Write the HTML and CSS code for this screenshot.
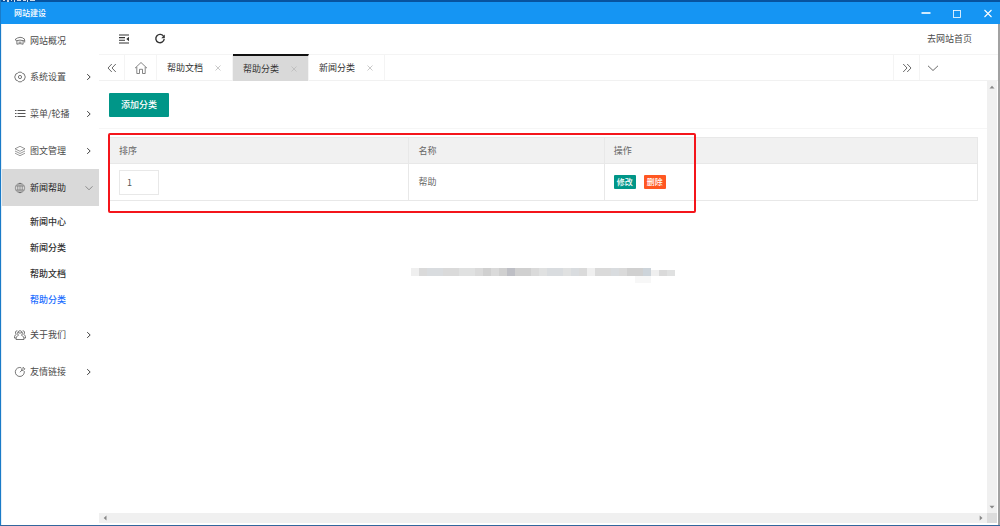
FILE: index.html
```html
<!DOCTYPE html>
<html lang="zh-CN">
<head>
<meta charset="utf-8">
<title>网站建设</title>
<link rel="stylesheet" href="styles.css">
</head>
<body>
<div class="window">
  <div class="desktop-strip">
    <svg class="strip-marks" viewBox="0 0 34 2" aria-hidden="true"><path d="M2 0h2v1h-2zM6 0h2v2h-2zM10 0h1v1h-1zM13 0h1v2h-1zM16 0h4v1h-4zM22 0h3v1h-3zM26 0h1v2h-1zM29 0h5v1h-5z" fill="#cfdcea"/></svg>
  </div>
  <header class="titlebar">
    <span class="title">网站建设</span>
    <div class="win-controls">
      <button class="win-btn" aria-label="最小化"><svg viewBox="0 0 10 10"><path d="M.5 5h9" stroke-width="1.6"/></svg></button>
      <button class="win-btn" aria-label="最大化"><svg viewBox="0 0 10 10"><rect x="1.5" y="2.5" width="7" height="7" stroke-width=".8"/></svg></button>
      <button class="win-btn" aria-label="关闭"><svg viewBox="0 0 10 10"><path d="M1.5 2l7 7m0-7l-7 7" stroke-width="1.1"/></svg></button>
    </div>
  </header>
  <div class="body">
    <nav class="sidebar">
      <a class="item first" href="#"><svg class="ico" viewBox="0 0 12 12"><path d="M1 4.600Q3.500 2.500 6 2.300t5 2.300L9.300 5.700Q6 4.500 2.700 5.700zM2.900 5.800v3.400Q6 8 9.100 9.200V5.800M4.500 7.200h3M10.700 5v2.500"/></svg><span>网站概况</span></a>
      <a class="item" href="#"><svg class="ico" viewBox="0 0 12 12"><path d="M4.600 1.200h2.800L8.500 2.400l1.600.5L11.300 6l-1.200 3.100-1.600.5-1.100 1.200H4.600L3.500 9.600l-1.600-.5L.7 6l1.200-3.100 1.600-.5z"/><circle cx="6" cy="6" r="1.600"/></svg><span>系统设置</span><svg class="arrow" viewBox="0 0 8 8"><path d="M2.200 1.200L5.200 4l-3 2.800"/></svg></a>
      <a class="item" href="#"><svg class="ico" viewBox="0 0 12 12"><path d="M1 2.500h1.500M3.500 2.500h8M1 5.500h1.500M3.500 5.500h8M1 8.500h1.500M3.500 8.500h8" stroke-width="1"/></svg><span>菜单/轮播</span><svg class="arrow" viewBox="0 0 8 8"><path d="M2.200 1.200L5.200 4l-3 2.800"/></svg></a>
      <a class="item" href="#"><svg class="ico" viewBox="0 0 12 12"><path d="M6 1.300l5 2.500-5 2.500-5-2.500zM1 6l5 2.500L11 6M1 8.200l5 2.500 5-2.500" stroke-width=".6"/></svg><span>图文管理</span><svg class="arrow" viewBox="0 0 8 8"><path d="M2.200 1.200L5.200 4l-3 2.800"/></svg></a>
      <a class="item open" href="#"><svg class="ico" viewBox="0 0 12 12"><g stroke-width=".5"><circle cx="6" cy="6" r="4.700"/><ellipse cx="6" cy="6" rx="2.300" ry="4.700"/><path d="M6 1.300v9.400M1.800 4h8.400M1.800 8h8.400"/></g></svg><span>新闻帮助</span><svg class="arrow" viewBox="0 0 8 8"><path d="M.5 2.300L4 5.800l3.500-3.500"/></svg></a>
      <div class="submenu">
        <a href="#">新闻中心</a>
        <a href="#">新闻分类</a>
        <a href="#">帮助文档</a>
        <a class="current" href="#">帮助分类</a>
      </div>
      <a class="item" href="#"><svg class="ico" viewBox="0 0 12 12"><path d="M4.500 6.300a2.500 2.500 0 1 1 3 0c1.700.6 2.400 1.800 2.500 4.200H2c.1-2.400.8-3.600 2.500-4.200zM3.300 1.700C1.500 1.500.8 4 2.200 5.500 1 6 .5 7 .4 9H2M8.700 1.700c1.800-.2 2.500 2.300 1.100 3.800 1.200.5 1.700 1.500 1.800 3.500H10M4 3.600q2 1 4 0"/></svg><span>关于我们</span><svg class="arrow" viewBox="0 0 8 8"><path d="M2.200 1.200L5.200 4l-3 2.800"/></svg></a>
      <a class="item" href="#"><svg class="ico" viewBox="0 0 12 12"><path d="M7.200 1.700A4.500 4.500 0 1 0 10.200 5M6 6.200l2.200-2.400"/><path d="M7.800 2.800L9.300 1.300l.4 1.100 1.200.4-1.600 1.600-1.500-.2z"/></svg><span>友情链接</span><svg class="arrow" viewBox="0 0 8 8"><path d="M2.200 1.200L5.200 4l-3 2.800"/></svg></a>
    </nav>
    <div class="main">
      <div class="toolbar">
        <button class="tool" aria-label="收起菜单"><svg viewBox="0 0 12 12"><path d="M1 2h10M1 4.600h6M1 7.200h6M1 10h10" stroke-width="1.100"/><path d="M11 3.700v4.600L8.300 6z" fill="#333" stroke="none"/></svg></button>
        <button class="tool" aria-label="刷新"><svg viewBox="0 0 12 12"><path d="M9.700 3.500A4.200 4.200 0 1 0 10.200 6" stroke-width="1.400"/><path d="M10.800 1.500v3.700H7.300z" fill="#333" stroke="none"/></svg></button>
        <a class="home-link" href="#">去网站首页</a>
      </div>
      <div class="tabs">
        <button class="tab-nav" aria-label="向左"><svg viewBox="0 0 12 12"><path d="M5.800 2L2 6l3.800 4M9.800 2L6 6l3.800 4"/></svg></button>
        <button class="tab-nav home" aria-label="主页"><svg class="house" viewBox="0 0 14 14"><path d="M1 7.200L7 1.500l6 5.700M2.800 6v6.500h2.700V8.300h3v4.200h2.700V6"/></svg></button>
        <div class="tab"><a href="#">帮助文档</a><button class="close" aria-label="关闭帮助文档"><svg viewBox="0 0 8 8"><path d="M1.500 1.500l5 5m0-5l-5 5"/></svg></button></div>
        <div class="tab active"><a href="#">帮助分类</a><button class="close" aria-label="关闭帮助分类"><svg viewBox="0 0 8 8"><path d="M1.500 1.500l5 5m0-5l-5 5"/></svg></button></div>
        <div class="tab"><a href="#">新闻分类</a><button class="close" aria-label="关闭新闻分类"><svg viewBox="0 0 8 8"><path d="M1.500 1.500l5 5m0-5l-5 5"/></svg></button></div>
        <div class="tabs-end">
          <button class="tab-nav" aria-label="向右"><svg viewBox="0 0 12 12"><path d="M2.200 2L6 6l-3.800 4M6.200 2L10 6l-3.800 4"/></svg></button>
          <button class="tab-nav" aria-label="更多"><svg viewBox="0 0 12 12"><path d="M1 3.800l5 4.700 5-4.700"/></svg></button>
        </div>
      </div>
      <div class="viewport">
        <main class="page">
          <div class="actions"><button class="add">添加分类</button></div>
          <div class="list">
            <table class="table">
              <thead><tr><th class="col-sort">排序</th><th class="col-name">名称</th><th>操作</th></tr></thead>
              <tbody><tr>
                <td><input class="sort" type="text" value="1" aria-label="排序"></td>
                <td>帮助</td>
                <td><div class="row-actions"><button class="mini edit">修改</button><button class="mini delete">删除</button></div></td>
              </tr></tbody>
            </table>
            <div class="highlight"></div>
          </div>
          <div class="mosaic" aria-hidden="true">
            <i class="m0"></i><i class="m2"></i><i class="m3"></i><i class="m3"></i><i class="m2"></i><i class="m2"></i><i class="m1"></i><i class="m1"></i><i class="m2"></i><i class="m4"></i><i class="m2"></i><i class="m4"></i><i class="m5"></i><i class="m4"></i><i class="m4"></i><i class="m2"></i><i class="m1"></i><i class="m3"></i><i class="m3"></i><i class="m1"></i><i class="m3"></i><i class="m2"></i><i class="m0"></i><i class="m2"></i><i class="m2"></i><i class="m3"></i><i class="m2"></i><i class="m4"></i><i class="m4 drip"></i><i class="m6 drip"></i><i class="m0 low"></i><i class="m2 low"></i><i class="m1 low"></i>
          </div>
        </main>
        <div class="vscroll"><svg viewBox="0 0 8 8"><path d="M1.500 5.500L4 2.700l2.500 2.800z"/></svg><svg viewBox="0 0 8 8"><path d="M1.500 2.700L4 5.500l2.500-2.800z"/></svg></div>
        <div class="hscroll"><svg viewBox="0 0 8 8"><path d="M5.500 1.500L2.700 4l2.800 2.500z"/></svg><svg viewBox="0 0 8 8"><path d="M2.700 1.500L5.500 4 2.700 6.500z"/></svg></div>
        <div class="corner"></div>
      </div>
    </div>
  </div>
</div>
</body>
</html>
```
FILE: styles.css
```css
* { box-sizing: border-box; }
body {
  margin: 0;
  background: #fff;
  color: #4a4a4a;
  font: 9px/12px "Noto Sans CJK SC", "Liberation Sans", sans-serif;
}
a { color: inherit; text-decoration: none; }
button {
  margin: 0;
  padding: 0;
  border: 0;
  background: none;
  color: inherit;
  font: inherit;
}
svg { display: block; fill: none; stroke: #444; stroke-width: 0.8; }

.window {
  display: flex;
  flex-direction: column;
  min-height: 100vh;
  border-left: 1px solid #1a7bc8;
  border-bottom: 1px solid #34679d;
}
.desktop-strip { height: 2px; background: #07539f; }
.strip-marks { width: 34px; height: 2px; stroke: none; }
.titlebar {
  display: flex;
  align-items: center;
  justify-content: space-between;
  height: 22px;
  padding: 0 7px 0 13px;
  background: #1595f3;
  color: #fff;
}
.title { font-size: 8px; font-weight: 500; }
.win-controls { display: flex; gap: 21px; }
.win-btn svg { width: 10px; height: 10px; stroke: #fff; stroke-width: 1; }

.body { display: flex; flex: 1; border-right: 2px solid #a2a2a2; }
.sidebar { width: 98px; flex: none; border-left: 1px solid #e4eef6; }
.item {
  display: flex;
  align-items: center;
  height: 37px;
  padding: 0 6px 0 12px;
}
.item.first { height: 34px; }
.ico { width: 12px; height: 12px; margin-right: 4px; stroke: #555; }
.arrow { width: 8px; height: 8px; margin-left: auto; stroke-width: 1; }
.item.open { background: #d9d9d9; color: #222; }
.open .arrow { stroke: #777; stroke-width: 0.8; }
.submenu { padding: 3px 0; color: #333; font-weight: 500; }
.submenu a { display: block; padding: 0 0 0 28px; line-height: 26px; }
.submenu .current { color: #1e6fff; }

.main { display: flex; flex: 1; flex-direction: column; min-width: 0; }
.toolbar {
  display: flex;
  align-items: center;
  gap: 24px;
  height: 30px;
  padding: 0 26px 0 19px;
}
.tool svg { width: 12px; height: 12px; stroke: #333; }
.home-link { margin-left: auto; }
.tabs {
  display: flex;
  height: 27px;
  border-top: 1px solid #f4f4f4;
  border-bottom: 1px solid #f1f1f1;
}
.tab-nav {
  display: grid;
  place-items: center;
  width: 26px;
  border-right: 1px solid #f4f4f4;
}
.tab-nav svg { width: 12px; height: 12px; }
.tab-nav.home { width: 32px; }
.tab-nav .house { width: 14px; height: 14px; stroke: #666; }
.tab {
  display: flex;
  align-items: center;
  justify-content: space-between;
  width: 76px;
  padding: 0 10px;
  border-right: 1px solid #f4f4f4;
  color: #333;
}
.tab.active {
  margin: -1px 0;
  border-top: 2px solid #111;
  background: #d9d9d9;
}
.close svg { width: 8px; height: 8px; stroke: #bbb; }
.tabs-end { display: flex; margin-left: auto; padding-right: 53px; }
.tabs-end .tab-nav { border-right: 0; border-left: 1px solid #f4f4f4; }

.viewport {
  display: grid;
  flex: 1;
  grid-template: 1fr 10px / 1fr 10px;
  padding: 0 1px 2px 0;
}
.page { min-width: 0; }
.actions { padding: 12px 10px 11px; border-bottom: 1px solid #f6f6f6; }
.add {
  display: block;
  padding: 0 12px;
  border-radius: 1px;
  background: #009688;
  color: #fff;
  font-weight: 500;
  line-height: 24px;
}
.list { position: relative; padding: 8px 9px 0 10px; }
.table {
  width: 100%;
  border-collapse: collapse;
  table-layout: fixed;
  color: #666;
}
.table th, .table td {
  padding: 0 9px;
  border: 1px solid #e8e8e8;
  font-weight: 400;
  text-align: left;
}
.table th { height: 26px; background: #f1f1f1; }
.table td { height: 37px; }
.col-sort { width: 34.5%; }
.col-name { width: 22.5%; }
.sort {
  display: block;
  width: 40px;
  height: 25px;
  padding: 0 7px;
  border: 1px solid #e8e8e8;
  color: #555;
  font: inherit;
}
.row-actions { display: flex; gap: 8px; }
.mini {
  padding: 0 3px;
  border-radius: 1px;
  color: #fff;
  font-size: 8px;
  font-weight: 500;
  line-height: 14px;
}
.edit { background: #009688; }
.delete { background: #ff5722; }
.highlight {
  position: absolute;
  top: 4px;
  left: 9px;
  width: 66.2%;
  height: 80px;
  border: 2px solid #f4151b;
  border-radius: 2px;
}
.mosaic {
  display: flex;
  justify-content: center;
  height: 16px;
  margin-top: 67px;
}
.mosaic i { width: 8px; height: 8px; }
.mosaic .m0 { background: #efefef; }
.mosaic .m1 { background: #e0e1e1; }
.mosaic .m2 { background: #dadada; }
.mosaic .m3 { background: #d9dcdf; }
.mosaic .m4 { background: #d0d0d0; }
.mosaic .m5 { background: #bebfc5; }
.mosaic .m6 { background: #cdd4da; }
.mosaic .drip { border-bottom: 7px solid #f7f7f7; height: 15px; }
.mosaic .low { height: 6px; margin-top: 2px; }

.vscroll, .hscroll {
  display: flex;
  align-items: center;
  justify-content: space-between;
  background: #f0f0f0;
}
.vscroll { flex-direction: column; padding: 2px 0; }
.hscroll { padding: 0 2px; }
.vscroll svg, .hscroll svg { width: 8px; height: 8px; fill: #888; stroke: none; }
.corner { background: #dcdcdc; }
```
